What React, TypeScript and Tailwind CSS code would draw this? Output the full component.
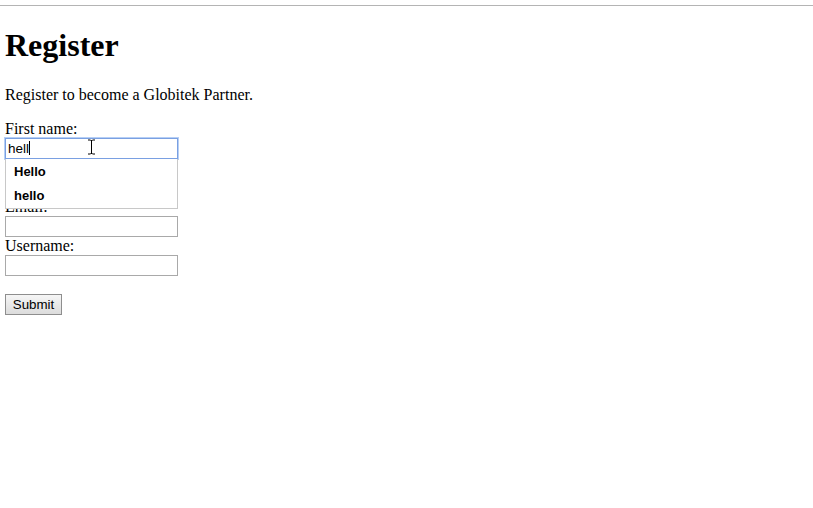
import React from "react";

const serif = { fontFamily: '"Liberation Serif", "Times New Roman", serif' };
const sans = { fontFamily: '"Liberation Sans", Arial, sans-serif' };

function Field({ label }: { label: string }) {
    return (
        <>
            <div className="h-[18px] leading-[18px] text-[16px]">{label}</div>
            <div className="w-[173px] h-[21px] border border-[#a9a9a9] bg-white"></div>
        </>
    );
}

export default function App() {
    return (
        <div className="min-h-screen bg-white text-black" style={serif}>
            <div className="h-[5px]"></div>
            <div className="border-t border-[#b4b4b4]"></div>

            <div className="pl-[5px]">
                <h1 className="pt-[21.4px] h-[58.2px] text-[32px] font-bold leading-[36.8px]">Register</h1>
                <p className="mt-[21.4px] text-[16px] leading-[18.4px]">Register to become a Globitek Partner.</p>

                <form className="mt-[16px]">
                    {/* First name, focused with autocomplete open */}
                    <div className="h-[18px] leading-[18px] text-[16px]">First name:</div>
                    <div className="relative w-[173px] h-[21px]">
                        <div className="w-full h-full border border-[#7aa0e2] ring-1 ring-[#b6cff5] bg-white flex items-center pl-[2px]">
                            <span className="text-[13.5px] leading-none" style={sans}>hell</span>
                            <span className="w-px h-[14px] bg-black"></span>
                        </div>

                        {/* I-beam mouse cursor */}
                        <svg className="absolute left-[82px] top-[1px]" width="9" height="16" viewBox="0 0 9 16">
                            <path d="M1 1h2.5M5.5 1H8M4.5 1.5v13M1 15h2.5M5.5 15H8M3.5 1.5h2M3.5 14.5h2" stroke="#000" strokeWidth="1" fill="none" />
                        </svg>

                        {/* Autocomplete dropdown */}
                        <div
                            className="absolute left-0 top-[21px] z-10 w-[173px] h-[50px] border border-t-0 border-[#c8c8c8] bg-white pt-[1px]"
                            style={sans}
                        >
                            <div className="h-[24px] leading-[24px] pl-[8px] text-[13px] font-bold">Hello</div>
                            <div className="h-[24px] leading-[24px] pl-[8px] text-[13px] font-bold">hello</div>
                        </div>
                    </div>

                    <Field label="Last name:" />
                    <Field label="Email:" />
                    <Field label="Username:" />

                    <div className="h-[18px]"></div>
                    <button
                        type="button"
                        className="block w-[57px] h-[21px] border border-[#8e8e8e] bg-gradient-to-b from-[#f6f6f6] to-[#dcdcdc] text-[13.33px] leading-none text-black"
                        style={sans}
                    >
                        Submit
                    </button>
                </form>
            </div>
        </div>
    );
}
